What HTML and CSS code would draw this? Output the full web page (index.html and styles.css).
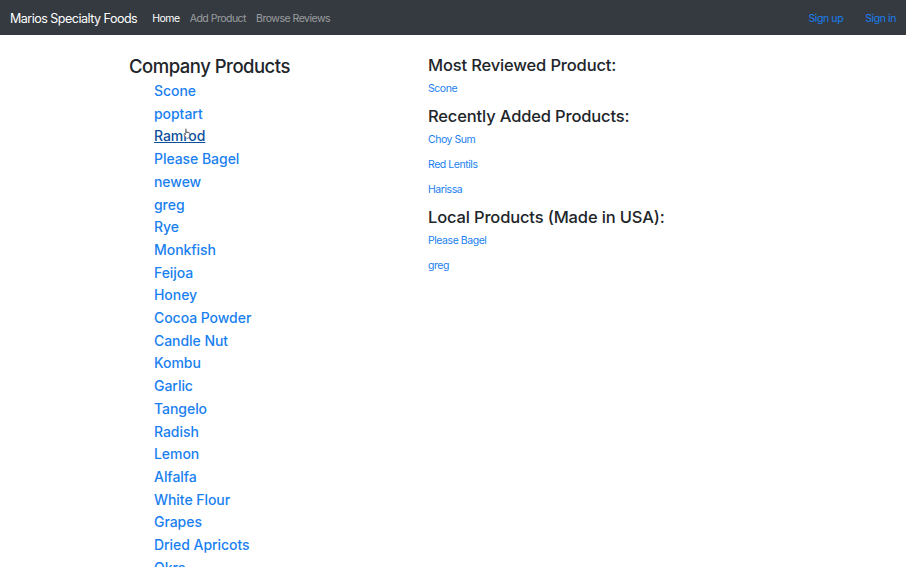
FILE: index.html
```html
<!DOCTYPE html>
<html>
<head>
<meta charset="utf-8">
<link rel="stylesheet" href="styles.css">
</head>
<body>
<nav class="navbar">
  <a class="brand" href="#">Marios Specialty Foods</a>
  <div class="nav-left">
    <a class="nav-link active" href="#">Home</a>
    <a class="nav-link" href="#">Add Product</a>
    <a class="nav-link" href="#">Browse Reviews</a>
  </div>
  <div class="nav-right">
    <a class="auth-link" href="#">Sign up</a>
    <a class="auth-link" href="#">Sign in</a>
  </div>
</nav>
<main class="content">
  <section class="col-left">
    <h2 class="title-lg">Company Products</h2>
    <ul class="product-list">
      <li><a href="#">Scone</a></li>
      <li><a href="#">poptart</a></li>
      <li class="hover-item"><a class="hover" href="#">Ramrod</a><svg class="cursor" width="10" height="11" viewBox="0 0 10 11"><path d="M2.5 1.2c0-.6.9-.6.9 0V5l.1-1c0-.5.9-.5.9 0V5l.1-.7c0-.5.9-.5.9 0V5.2l.1-.4c0-.5.9-.5.9 0V8c0 1.3-.9 2.3-2.2 2.3H4.4c-.7 0-1.2-.3-1.6-.9L1 6.6c-.3-.5.3-1 .8-.6l.7.8z" fill="#fff" stroke="#555" stroke-width="0.6" stroke-linejoin="round"/></svg></li>
      <li><a href="#">Please Bagel</a></li>
      <li><a href="#">newew</a></li>
      <li><a href="#">greg</a></li>
      <li><a href="#">Rye</a></li>
      <li><a href="#">Monkfish</a></li>
      <li><a href="#">Feijoa</a></li>
      <li><a href="#">Honey</a></li>
      <li><a href="#">Cocoa Powder</a></li>
      <li><a href="#">Candle Nut</a></li>
      <li><a href="#">Kombu</a></li>
      <li><a href="#">Garlic</a></li>
      <li><a href="#">Tangelo</a></li>
      <li><a href="#">Radish</a></li>
      <li><a href="#">Lemon</a></li>
      <li><a href="#">Alfalfa</a></li>
      <li><a href="#">White Flour</a></li>
      <li><a href="#">Grapes</a></li>
      <li><a href="#">Dried Apricots</a></li>
      <li><a href="#">Okra</a></li>
    </ul>
  </section>
  <section class="col-right">
    <h3 class="title-md">Most Reviewed Product:</h3>
    <p class="small-link"><a href="#">Scone</a></p>
    <h3 class="title-md">Recently Added Products:</h3>
    <p class="small-link"><a href="#">Choy Sum</a></p>
    <p class="small-link"><a href="#">Red Lentils</a></p>
    <p class="small-link"><a href="#">Harissa</a></p>
    <h3 class="title-md">Local Products (Made in USA):</h3>
    <p class="small-link"><a href="#">Please Bagel</a></p>
    <p class="small-link"><a href="#">greg</a></p>
  </section>
</main>
</body>
</html>
```

FILE: styles.css
```css
* { box-sizing: border-box; }
html, body { margin: 0; padding: 0; }
body {
  font-family: Inter, "Liberation Sans", Arial, sans-serif;
  background: #ffffff;
  color: #212529;
  height: 567px;
  overflow: hidden;
}
a { text-decoration: none; color: #1a7ff0; }

.navbar {
  height: 35px;
  background: #343a40;
  display: flex;
  align-items: center;
  padding: 1px 10px 0 10px;
}
.brand {
  color: #ffffff;
  font-size: 12.5px;
  letter-spacing: -0.5px;
  margin-right: 15px;
}
.nav-left { display: flex; gap: 10px; }
.nav-link {
  color: rgba(255,255,255,0.5);
  font-size: 10.5px;
  letter-spacing: -0.5px;
}
.nav-link.active { color: #ffffff; }
.nav-right { margin-left: auto; display: flex; gap: 22px; }
.auth-link { color: #1a7ff0; font-size: 10.5px; letter-spacing: -0.4px; }

.content {
  display: flex;
  padding-top: 19px;
  padding-left: 129px;
}
.col-left { width: 299px; flex: none; }
.col-right { flex: 1; padding-top: 1px; }

.title-lg {
  font-size: 18.5px;
  letter-spacing: -0.5px;
  font-weight: 500;
  line-height: 24px;
  margin: 0 0 2px 0;
}
.product-list {
  list-style: none;
  margin: 0;
  padding-left: 25px;
}
.product-list li {
  font-size: 14px;
  letter-spacing: -0.05px;
  font-weight: 500;
  line-height: 22.7px;
}
.hover-item { position: relative; }
.cursor { position: absolute; left: 29px; top: 3px; }
.product-list a.hover {
  color: #0d4f9c;
  text-decoration: underline;
}
.title-md {
  font-size: 16.5px;
  letter-spacing: -0.15px;
  font-weight: 500;
  line-height: 21.6px;
  margin: 1px 0 4.5px 0;
}
.title-md:first-child { margin-top: 0; }
.small-link {
  font-size: 10.5px;
  letter-spacing: -0.45px;
  line-height: 16.5px;
  margin: 0 0 8.5px 0;
}
```
